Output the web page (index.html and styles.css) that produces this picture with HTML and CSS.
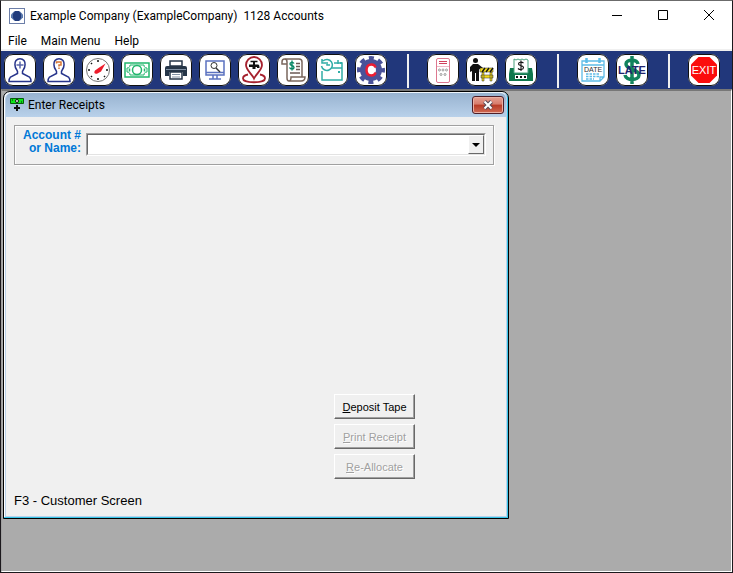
FILE: index.html
```html
<!DOCTYPE html>
<html lang="en">
<head>
<meta charset="utf-8">
<title>Example Company</title>
<link rel="stylesheet" href="styles.css">
</head>
<body>
<div class="app">
  <header class="titlebar">
    <svg class="app-icon" viewBox="0 0 16 16" aria-hidden="true"><rect x=".5" y=".5" width="15" height="15" fill="#fff" stroke="#6c7ea8"/><path d="M5 3.500h6l3 3v3l-3 3H5l-3-3v-3z" fill="#5a78ac"/><path d="M6 3h4l2 3v4l-2 3H6l-2-3V6z" fill="#223c7c"/></svg>
    <h1 class="app-title">Example Company (ExampleCompany)&nbsp; 1128 Accounts</h1>
    <div class="window-controls">
      <button aria-label="Minimize"><svg viewBox="0 0 12 12"><path d="M1 5.500h10"/></svg></button>
      <button aria-label="Maximize"><svg viewBox="0 0 12 12"><path d="M1.500 .5h9v9h-9z"/></svg></button>
      <button aria-label="Close"><svg viewBox="0 0 12 12"><path d="M1 0l10 10M11 0L1 10"/></svg></button>
    </div>
  </header>
  <nav class="menubar">
    <button>File</button><button>Main Menu</button><button>Help</button>
  </nav>
  <div class="toolbar" role="toolbar" aria-label="Tools">
    <div class="tools">
      <button class="tool" aria-label="Add customer"><svg viewBox="0 0 32 32" fill="none" stroke="#27348b" stroke-width="1.500"><path d="M12.500 15.500c-2-3-2-7-.5-9 2-2.500 6-2.500 8 0 1.500 2 1.500 6-.5 9l-1 2v2l7 3.500c1 1 1.500 2 1.500 4.500H5c0-2.500.5-3.500 1.500-4.500l7-3.500v-2z"/><path d="M16 7.500v7M12.500 11h7" stroke="#5965ab" stroke-width="1.500"/></svg></button>
      <button class="tool" aria-label="Find customer"><svg viewBox="0 0 32 32" fill="none" stroke="#27348b" stroke-width="1.500"><path d="M12.500 15.500c-2-3-2-7-.5-9 2-2.500 6-2.500 8 0 1.500 2 1.500 6-.5 9l-1 2v2l7 3.500c1 1 1.500 2 1.500 4.500H5c0-2.500.5-3.500 1.500-4.500l7-3.500v-2z"/><path d="M13.500 9.500V8h4.500v3h-2v1.500M16 13.500v1.500" stroke="#d87532" stroke-width="1.500"/></svg></button>
      <button class="tool" aria-label="Meter readings"><svg viewBox="0 0 32 32" fill="none"><circle cx="16" cy="16" r="11.500" stroke="#777"/><g stroke="#111" stroke-width="1.500"><path d="M16 6v2M16 24v2M6 16h2M24 16h2M9 9l1 1M22 22l1 1M9 23l1-1"/></g><path d="M23.500 9.500l-4.500 8-3.500 2c-3 1-4-1-2.500-3l3.500-2.500z" fill="#ed1c2b"/></svg></button>
      <button class="tool" aria-label="Receipts"><svg viewBox="0 0 32 32" fill="none" stroke="#21b66c" stroke-width="1.500"><path d="M4 9h24v14H4z"/><path d="M9 11h14c0 2 1 3 3 3v4c-2 0-3 1-3 3H9c0-2-1-3-3-3v-4c2 0 3-1 3-3z" stroke-width="1"/><circle cx="16" cy="16" r="4.500" fill="#fff"/><path d="M8.500 14.500v3M23.500 14.500v3" stroke-width="1.500"/></svg></button>
      <button class="tool" aria-label="Print"><svg viewBox="0 0 32 32"><path d="M10 7h12v5H10z" fill="#fff" stroke="#263648" stroke-width="1.500"/><path d="M7 12h18q2 0 2 2v8h-4v-4H9v4H5v-8q0-2 2-2z" fill="#263648"/><path d="M10 18h12v7H10z" fill="#fff" stroke="#263648" stroke-width="1.500"/><path d="M6 15.500h20M12 20.500h8M12 23h8" stroke="#8292a5"/></svg></button>
      <button class="tool" aria-label="Inquiry"><svg viewBox="0 0 32 32" fill="none" stroke="#5b72c0" stroke-width="1.500"><path d="M7 7h18v14H7zM7 18.500h18M14 21v4M18 21v4M10 25h12"/><circle cx="15" cy="11.500" r="3" stroke="#333" stroke-width="1"/><path d="M17 14l4 4" stroke="#333"/></svg></button>
      <button class="tool" aria-label="Service locations"><svg viewBox="0 0 32 32" fill="none"><path d="M10 20.500c-3 .5-5 2-5 4 0 5 22 5 22 0 0-2-2-3.500-5-4M16 24.500C14 20 8 16 8 11a8 8 0 0116 0C24 16 18 20 16 24.500z" stroke="#a5202d" stroke-width="1.800"/><path d="M11 10.500h9c1 0 1.500 1 1.500 3.500h-2.500v-1h-1.500v2h-3v-2H11zM15 7h2v4h-2z" fill="#111"/><path d="M12.500 7.500h7" stroke="#111" stroke-width="1.500"/></svg></button>
      <button class="tool" aria-label="Billing"><svg viewBox="0 0 32 32" fill="none"><path d="M10 24V8c0-4-5-4-5 0v2h5M8 5h14c2 0 3 1 3 3v15M10 24c0 2 1 3 2 3h12c3 0 4-2 4-4H14c0 3-1 4-2 4" stroke="#7a675d" stroke-width="1.500"/><path d="M19 9.500h4M19 12.500h4M19 15.500h4M13 19h10" stroke="#6b5a55" stroke-width="1.300"/><path d="M17 9.500c-1-2-4-1-4 .5 0 2 4 1 4 3.500 0 2-3.500 2-4.500 0M15 6.500v10" stroke="#078665" stroke-width="1.400"/></svg></button>
      <button class="tool" aria-label="Schedule"><svg viewBox="0 0 32 32" fill="none" stroke="#30ada7" stroke-width="1.500"><path d="M6 17v9h20V9h-8M16 14h10M22 6v4"/><path d="M7 7a5.500 5.500 0 11-1.500 5M6 5v4h4M11 8v3h3"/><path d="M22 18h2M24 9h2" stroke-width="2"/></svg></button>
      <button class="tool" aria-label="Settings"><svg viewBox="0 0 32 32" fill="none"><circle cx="16" cy="16" r="12" stroke="#4a5299" stroke-width="4" stroke-dasharray="5 4.425" stroke-dashoffset="2.500"/><circle cx="16" cy="16" r="8" fill="#fff" stroke="#4a5299" stroke-width="6"/><path d="M20.500 13.500c-.5-2-2-3-4-3-3 0-5 2-5 5.500s2 5.500 5 5.500c2 0 3.500-1 4-3" stroke="#ee1c32" stroke-width="2.500"/></svg></button>
    </div>
    <span class="separator"></span>
    <div class="tools">
      <button class="tool" aria-label="Calculator"><svg viewBox="0 0 32 32" fill="none" stroke="#dd7890"><rect x="9.500" y="4.500" width="13" height="24" rx="1.500"/><path d="M12 7.500h8M12 9.500h8" stroke="#d0405c"/><path d="M10 12.500h12" opacity=".5"/><g stroke="#999"><circle cx="12.500" cy="16" r="1"/><circle cx="16" cy="16" r="1"/><circle cx="19.500" cy="16" r="1"/><circle cx="14" cy="20.500" r="1"/><circle cx="18" cy="20.500" r="1"/></g></svg></button>
      <button class="tool" aria-label="Work orders"><svg viewBox="0 0 32 32"><circle cx="9.500" cy="6.500" r="2.500" fill="#111"/><path d="M7 10h5l5 4 2 1-1 2-5-2v12h-3v-8H9v8H6V17l-2 1v-5z" fill="#111"/><path d="M14 14h13v4H14zM16 18h2v9h-2zM24 18h2v9h-2zM15 21h12v3H15z" fill="#f2d91d" stroke="#333" stroke-width=".5"/><path d="M16 18l3-4M20 18l3-4M24 18l3-4" stroke="#111" stroke-width="1.300"/></svg></button>
      <button class="tool" aria-label="Cash register"><svg viewBox="0 0 32 32"><path d="M5 14h4v5h14v-5h4l1 6v7H4v-7z" fill="#10784d"/><path d="M9 5l2 1 2-1 2 1 2-1 2 1 2-1 2 1v13H9z" fill="#fff" stroke="#48a17c"/><path d="M10 21h12v4H10z" fill="#fff"/><path d="M11 23h10" stroke="#111" stroke-width="2" stroke-dasharray="2 2"/><path d="M18.500 9c-2-1.500-5-1-5 1s5 1 5 3.500-4 2.500-5.500 1M16 6.500v10.500" fill="none" stroke="#111" stroke-width="1.100"/></svg></button>
    </div>
    <span class="separator"></span>
    <div class="tools">
      <button class="tool" aria-label="Date"><svg viewBox="0 0 32 32" fill="none" stroke="#5dbce7"><path d="M5 7h22v16l-4 4H5zM5 11h22M23 27v-4h4" stroke-width="1.300"/><path d="M9.500 4v5M22.500 4v5" stroke-width="2.500"/><path d="M9 20h14M9 22.500h14M9 25h8" stroke-width="1.500" stroke-dasharray="2.500 1"/><text class="date-text" x="16" y="18" text-anchor="middle">DATE</text></svg></button>
      <button class="tool" aria-label="Late charges"><svg viewBox="0 0 32 32" fill="none"><path d="M22 10c-1-5-12-5-12 0 0 6 13 5 13 11 0 6-13 6-14 0M16 2v28" stroke="#12835d" stroke-width="3.500"/><text class="late-text" x="16" y="20" text-anchor="middle">LATE</text></svg></button>
    </div>
    <span class="separator"></span>
    <button class="tool" aria-label="Exit"><svg viewBox="0 0 32 32"><path d="M10.500 3h11L29 10.500v11L21.500 29h-11L3 21.500v-11z" fill="#fb0d0d"/><text class="exit-text" x="16" y="20" text-anchor="middle">EXIT</text></svg></button>
  </div>
  <main class="workspace">
    <section class="child" aria-labelledby="child-title">
      <header class="child-bar">
        <svg class="receipt-icon" viewBox="0 0 14 14" aria-hidden="true"><path d="M.5.500h13v5H.5z" fill="#0de51b" stroke="#075c0c"/><circle cx="7" cy="3" r="1.500" fill="#fff" stroke="#111"/><path d="M2 2h1M11 4h1" stroke="#111"/><path d="M7 7v6M4 10h6" stroke="#111" stroke-width="2"/></svg>
        <h2 id="child-title">Enter Receipts</h2>
        <button class="child-close" aria-label="Close Enter Receipts"><svg viewBox="0 0 12 10"><path d="M2.500 1.500l7 7M9.500 1.500l-7 7" stroke="#574b58" stroke-width="4"/><path d="M2.500 1.500l7 7M9.500 1.500l-7 7" stroke="#fff" stroke-width="2"/></svg></button>
      </header>
      <div class="child-body">
        <div class="lookup">
          <label for="account">Account #<br>or Name:</label>
          <div class="combo">
            <select id="account"><option></option></select>
            <span class="combo-arrow"></span>
          </div>
        </div>
        <div class="actions">
          <button><u>D</u>eposit Tape</button>
          <button disabled><u>P</u>rint Receipt</button>
          <button disabled><u>R</u>e-Allocate</button>
        </div>
        <p class="hint">F3 - Customer Screen</p>
      </div>
    </section>
  </main>
</div>
</body>
</html>
```
FILE: styles.css
```css
* { box-sizing: border-box; }

body {
  margin: 0;
  color: #000;
  font: 12px/16px Roboto, "Open Sans", sans-serif;
}

button { font: inherit; color: inherit; border: 0; padding: 0; background: none; }
h1, h2, p { margin: 0; font-size: 12px; font-weight: 400; }
svg { display: block; }

.app {
  min-height: 100vh;
  display: flex;
  flex-direction: column;
  background: #fff;
  border: 1px solid #1b181c;
  border-top-color: #6b6b6b;
}

.titlebar { display: flex; align-items: center; height: 30px; padding-left: 8px; }
.app-icon { width: 16px; height: 16px; }
.app-title { flex: 1; margin-left: 5px; white-space: nowrap; }
.window-controls { display: flex; }
.window-controls button { width: 46px; height: 28px; display: grid; place-items: center; }
.window-controls svg { width: 12px; height: 12px; fill: none; stroke: #000; }

.menubar {
  display: flex;
  gap: 14px;
  height: 20px;
  padding: 2px 7px;
  border-bottom: 2px solid #f0f0f0;
}

.toolbar {
  display: flex;
  align-items: flex-start;
  height: 38px;
  padding: 3px;
  background: #21377b;
}
.tools { display: flex; gap: 7px; }
.tool {
  width: 32px;
  height: 32px;
  border-radius: 9px;
  outline: 1px solid #111;
  outline-offset: -1px;
  background: #fff;
}
.tool svg { width: 32px; height: 32px; }
.separator { width: 2px; height: 34px; margin: 0 18px 0 20px; background: #f0f0f0; }

.date-text { font: 400 7px "Liberation Sans", sans-serif; fill: #333; stroke: none; }
.late-text { font: 700 11px "Liberation Sans", sans-serif; fill: #20246f; }
.exit-text { font: 400 11px "Liberation Sans", sans-serif; fill: #fff; }

.workspace {
  flex: 1;
  background: #ababab;
  border: 1px solid #a0a0a0;
  border-top: 2px solid #777;
  border-right-color: #fff;
  border-bottom-color: #fff;
  padding: 0 1px;
}

.child {
  width: 100%;
  max-width: 506px;
  border: 1px solid #000;
  border-radius: 7px 7px 0 0;
  background: #b9d1ea;
  padding: 0 2px 2px;
  box-shadow: inset -1px -1px #35c5e8, inset 1px 1px #fff;
}
.child-bar {
  display: flex;
  align-items: center;
  height: 25px;
  padding: 0 2px 0 4px;
  border-top: 1px solid #eef5fb;
  border-radius: 6px 6px 0 0;
  background: linear-gradient(#98b3d0, #b9d1ea);
}
.receipt-icon { width: 14px; height: 14px; }
.child-bar h2 { flex: 1; margin-left: 4px; }
.child-close {
  width: 32px;
  height: 18px;
  display: grid;
  place-items: center;
  border: 1px solid #4e1f29;
  border-radius: 3px;
  background: linear-gradient(#e6a193, #d77b6b 45%, #b83a25 50%, #cf6a54);
  box-shadow: inset 0 0 0 1px #eab0a4;
}
.child-close svg { width: 12px; height: 10px; }

.child-body {
  padding: 8px 12px 7px 8px;
  background: #f0f0f0;
  font-family: "Liberation Sans", Arial, sans-serif;
}
.lookup {
  display: flex;
  align-items: flex-start;
  height: 40px;
  padding: 3px 7px;
  border: 1px solid #a0a0a0;
  box-shadow: inset 1px 1px #fff, 1px 1px #fff;
}
.lookup label {
  width: 64px;
  padding-right: 5px;
  color: #0078d7;
  font-weight: 700;
  line-height: 13px;
  text-align: right;
  white-space: nowrap;
}
.combo {
  position: relative;
  flex: 1;
  margin-top: 4px;
  border: 1px solid #a0a0a0;
  border-right-color: #fff;
  border-bottom-color: #fff;
}
.combo select {
  display: block;
  width: 100%;
  height: 21px;
  appearance: none;
  border: 1px solid #696969;
  border-right-color: #e3e3e3;
  border-bottom-color: #e3e3e3;
  border-radius: 0;
  background: #fff;
}
.combo-arrow {
  position: absolute;
  top: 1px;
  right: 1px;
  bottom: 1px;
  width: 16px;
  display: grid;
  place-items: center;
  background: #f0f0f0;
  border: 1px solid #fff;
  border-right-color: #696969;
  border-bottom-color: #696969;
  pointer-events: none;
}
.combo-arrow::before {
  content: "";
  border: 4px solid transparent;
  border-top-color: #000;
  border-bottom: 0;
}

.actions {
  display: flex;
  flex-direction: column;
  gap: 5px;
  width: 81px;
  margin: 229px 79px 0 auto;
}
.actions button {
  height: 25px;
  border: 1px solid #fff;
  border-right-color: #696969;
  border-bottom-color: #696969;
  background: #f0f0f0;
  box-shadow: inset -1px -1px #a0a0a0;
  font-size: 11px;
  white-space: nowrap;
}
.actions button:disabled { color: #a0a0a0; text-shadow: 1px 1px #fff; }
.hint { margin-top: 14px; font-size: 13px; }
```
